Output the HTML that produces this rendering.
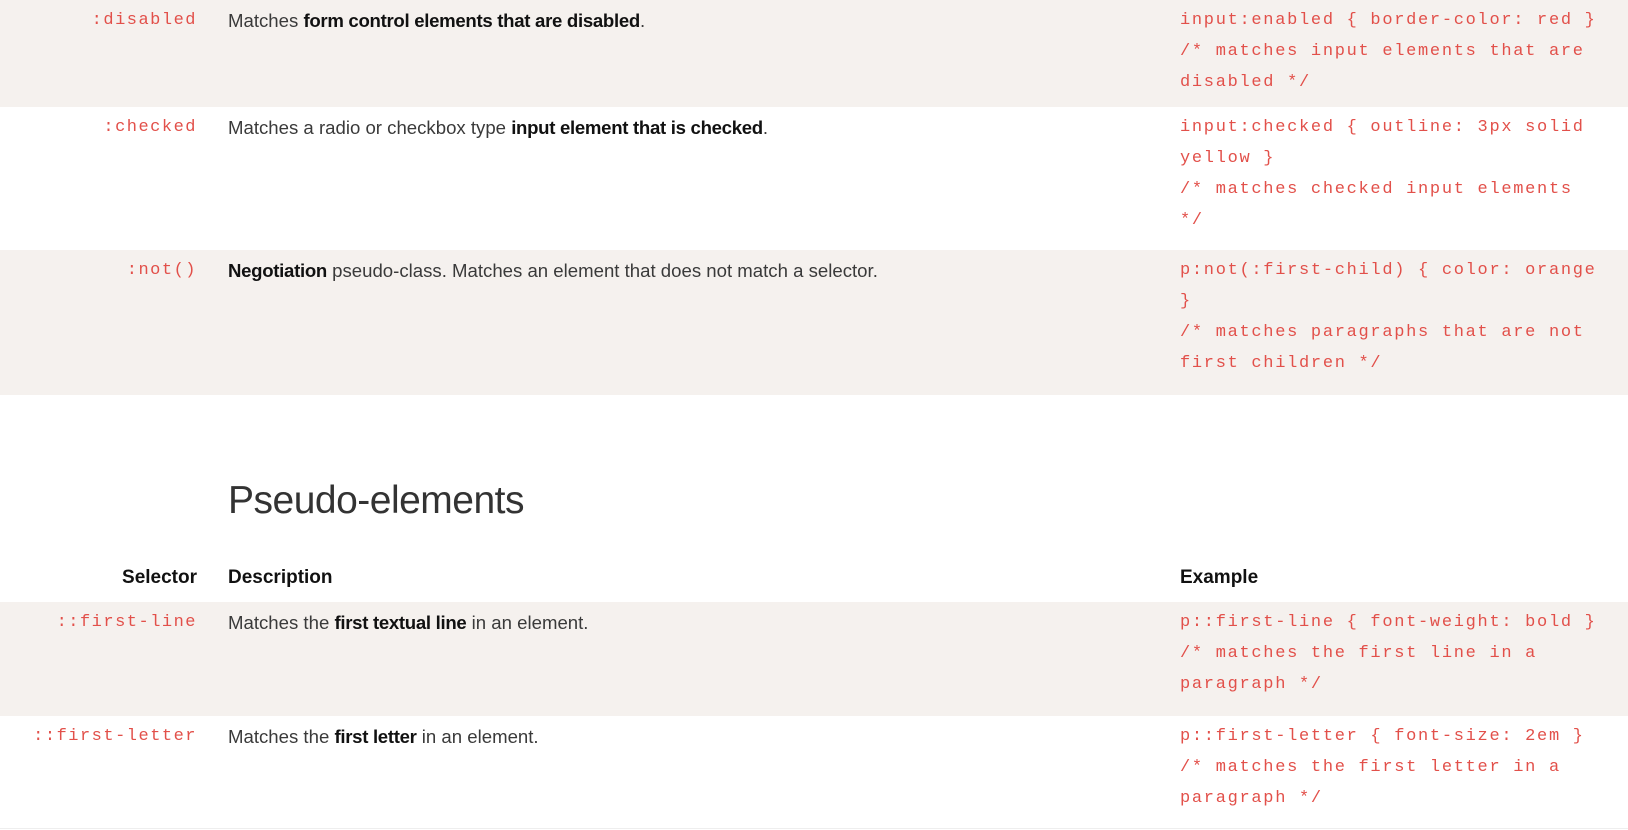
<!DOCTYPE html>
<html><head><meta charset="utf-8"><style>
body{margin:0;width:1628px;height:830px;overflow:hidden;background:#fff;font-family:"Liberation Sans",sans-serif;}
.row{position:absolute;left:0;width:1628px;}
.g{background:#f5f1ee;}
.sel,.desc,.code,.h{position:absolute;}
.sel{right:calc(1628px - 197px);top:5px;font-family:"Liberation Mono",monospace;font-size:17px;line-height:31px;color:#e2504a;letter-spacing:1.5px;white-space:nowrap;}
.desc{left:228px;top:5px;font-size:18.6px;line-height:31px;color:#3a3a3a;letter-spacing:0;white-space:nowrap;}
.desc b{color:#111;letter-spacing:-0.3px;}
.code{left:1180px;top:5px;font-family:"Liberation Mono",monospace;font-size:17px;line-height:31px;color:#e2504a;letter-spacing:1.7px;white-space:nowrap;}
.hd{font-weight:bold;font-size:19px;color:#111;position:absolute;top:567px;}
</style></head><body>
<div class="row g" style="top:0;height:107px">
<div class="sel">:disabled</div>
<div class="desc">Matches <b>form control elements that are disabled</b>.</div>
<div class="code">input:enabled { border-color: red }<br>/* matches input elements that are<br>disabled */</div>
</div>
<div class="row" style="top:107px;height:143px">
<div class="sel">:checked</div>
<div class="desc">Matches a radio or checkbox type <b>input element that is checked</b>.</div>
<div class="code">input:checked { outline: 3px solid<br>yellow }<br>/* matches checked input elements<br>*/</div>
</div>
<div class="row g" style="top:250px;height:145px">
<div class="sel">:not()</div>
<div class="desc"><b>Negotiation</b> pseudo-class. Matches an element that does not match a selector.</div>
<div class="code">p:not(:first-child) { color: orange<br>}<br>/* matches paragraphs that are not<br>first children */</div>
</div>
<div style="position:absolute;left:228px;top:475px;font-size:39px;font-weight:300;color:#333;line-height:52px;letter-spacing:-0.5px">Pseudo-elements</div>
<div class="hd" style="right:1431px">Selector</div>
<div class="hd" style="left:228px">Description</div>
<div class="hd" style="left:1180px">Example</div>
<div class="row g" style="top:602px;height:114px">
<div class="sel">::first-line</div>
<div class="desc">Matches the <b>first textual line</b> in an element.</div>
<div class="code">p::first-line { font-weight: bold }<br>/* matches the first line in a<br>paragraph */</div>
</div>
<div class="row" style="top:716px;height:112px;border-bottom:1px solid #eee">
<div class="sel">::first-letter</div>
<div class="desc">Matches the <b>first letter</b> in an element.</div>
<div class="code">p::first-letter { font-size: 2em }<br>/* matches the first letter in a<br>paragraph */</div>
</div>
</body></html>
